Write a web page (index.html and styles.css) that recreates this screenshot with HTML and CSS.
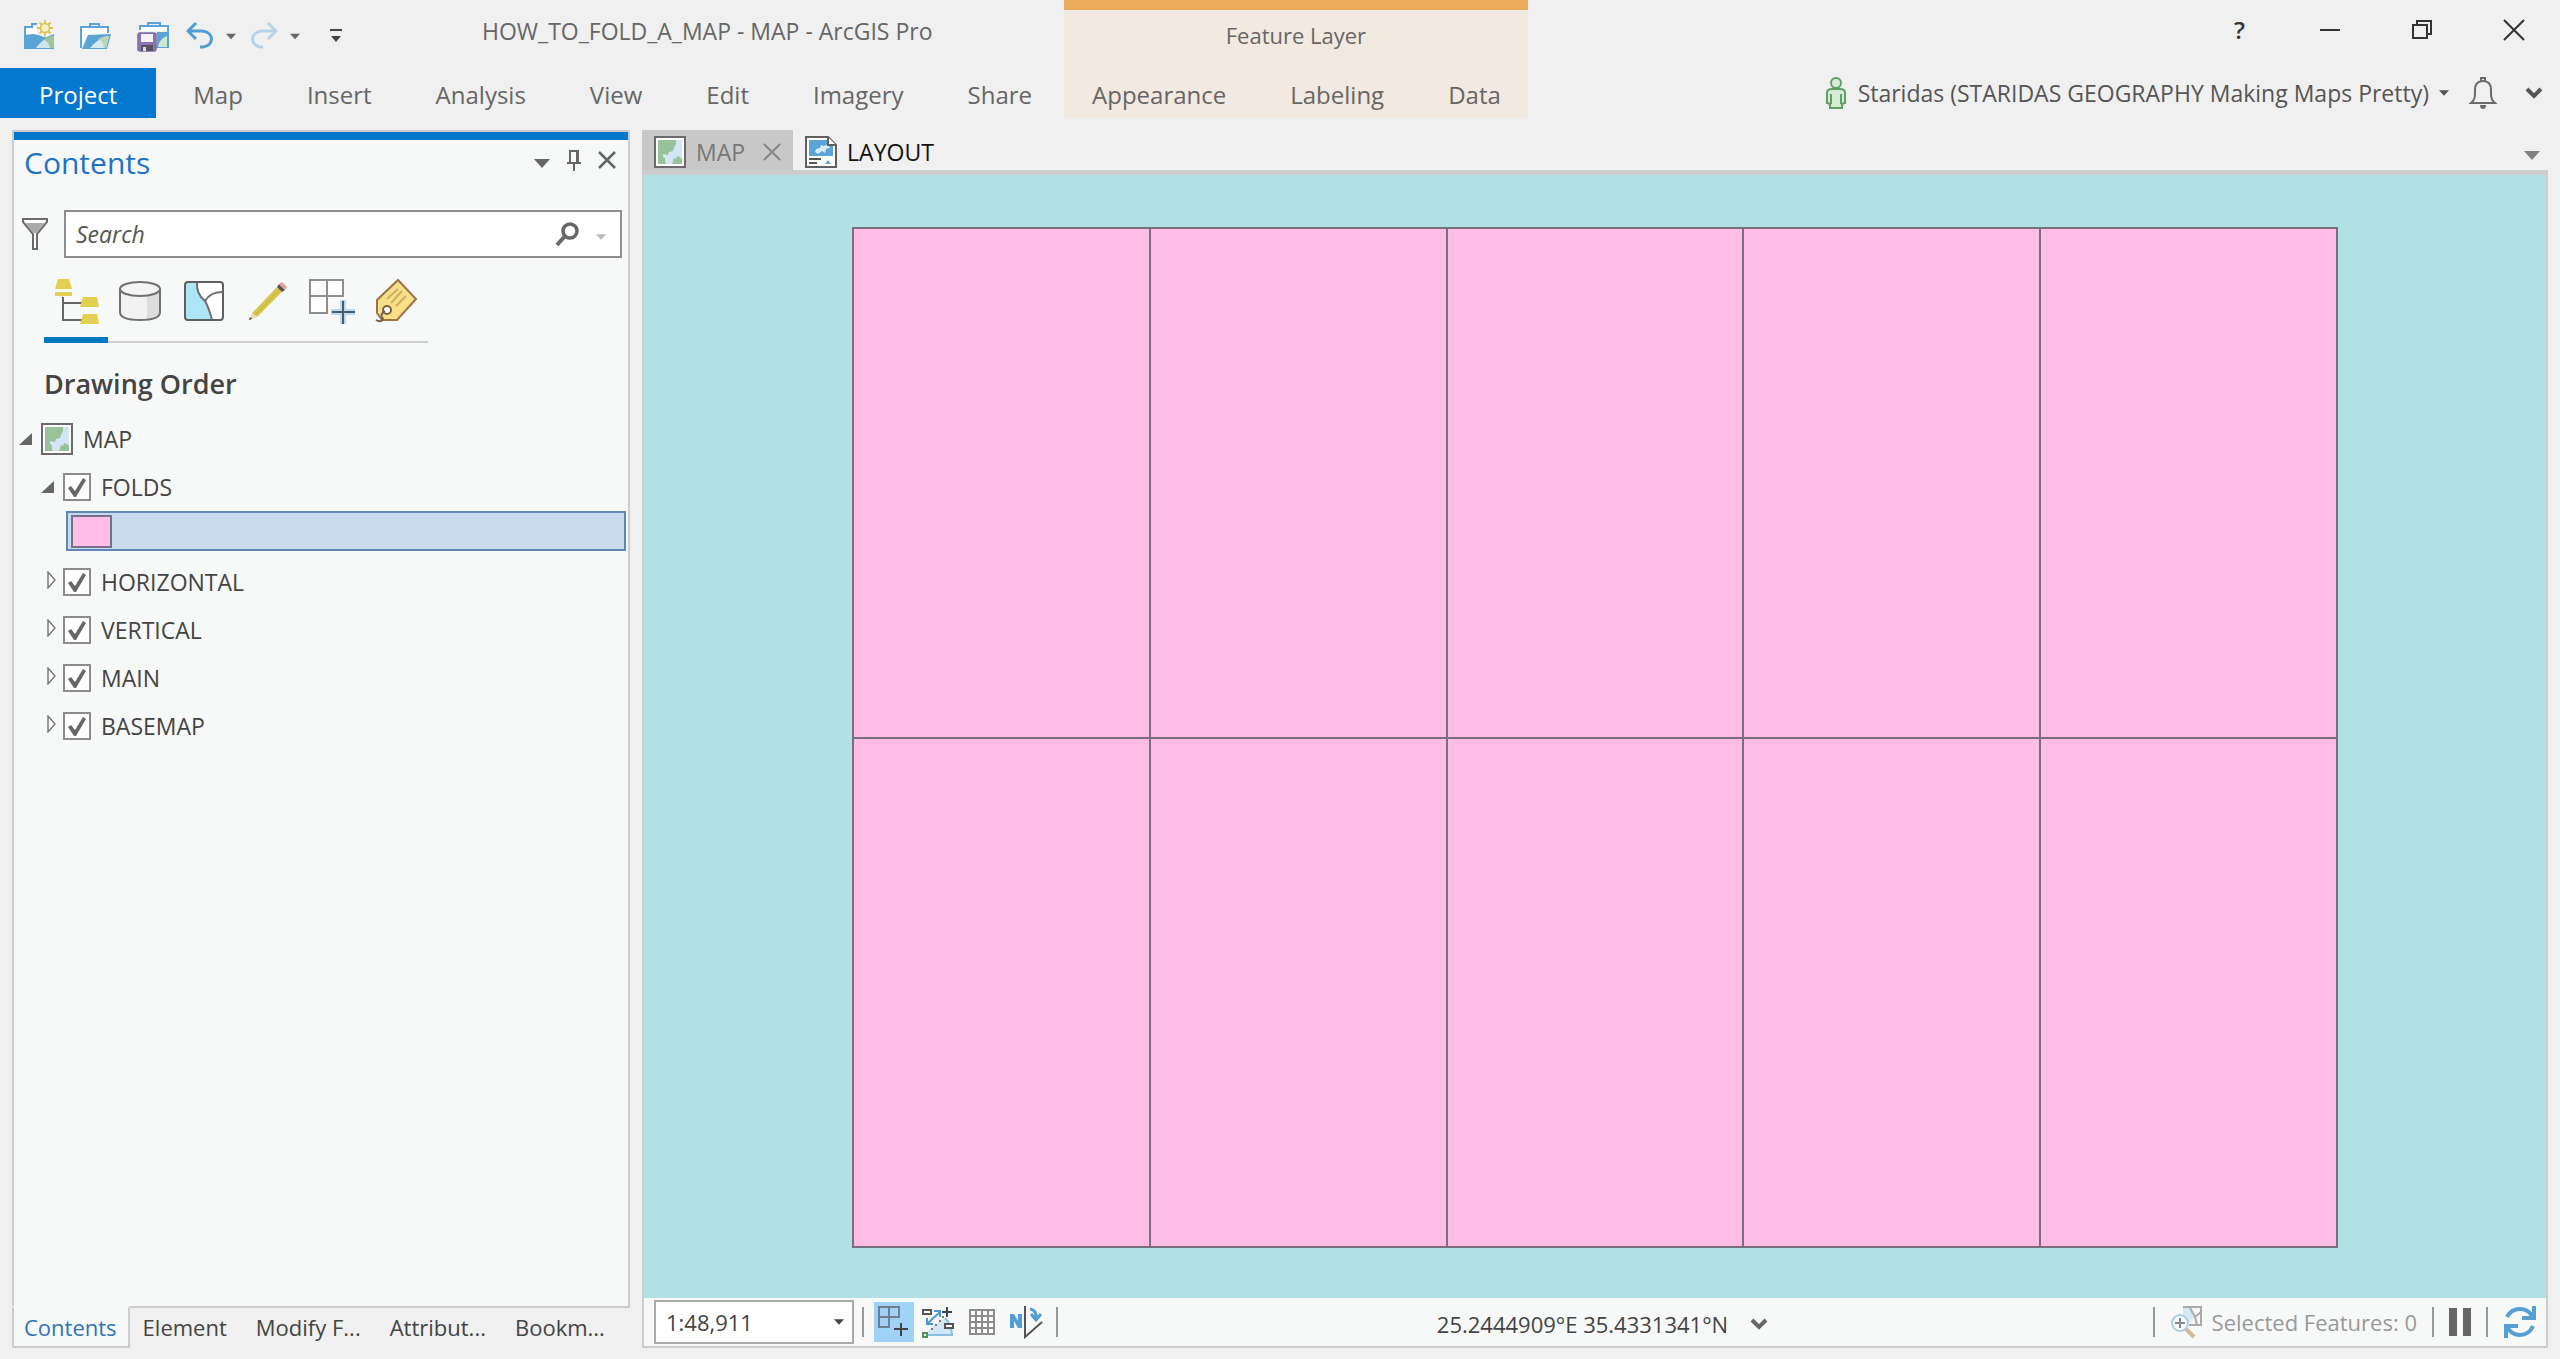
FILE: index.html
```html
<!DOCTYPE html>
<html lang="en">
<head>
<meta charset="utf-8">
<meta name="viewport" content="width=device-width, initial-scale=1">
<title>HOW_TO_FOLD_A_MAP - MAP - ArcGIS Pro</title>
<link rel="stylesheet" href="styles.css">
</head>
<body>
<svg class="defs" aria-hidden="true">
  <symbol id="mapdoc" viewBox="0 0 32 32">
    <rect x="1" y="1" width="30" height="30" fill="#fff" stroke="#6a6a6a" stroke-width="2"/>
    <rect x="4" y="4" width="24" height="24" fill="#d3e6f5"/>
    <path d="M4 4h18v4l-2 4-1 3-4 1-1 3-5-1v3l2 1v4l1 2H4z" fill="#98c298"/>
    <path d="M18 28l2-6 2 1 1-3 3 1 2 2v5z" fill="#98c298"/>
  </symbol>
  <symbol id="down" viewBox="0 0 16 9"><path d="M0 0h16L8 9z" fill="currentColor"/></symbol>
  <symbol id="chevron" viewBox="0 0 18 12"><path d="M2 2l7 7 7-7" fill="none" stroke="currentColor" stroke-width="4"/></symbol>
  <symbol id="open-node" viewBox="0 0 14 12"><path d="M13 0v12H0z" fill="#666"/></symbol>
  <symbol id="closed-node" viewBox="0 0 10 18"><path d="M1 1v16l7-8z" fill="#fff" stroke="#777" stroke-width="1.4"/></symbol>
</svg>

<header class="ribbon">
  <div class="title-left">
    <div class="quick">
      <button type="button" class="q-new" aria-label="New project">
        <svg width="32" height="32" viewBox="0 0 32 32"><path d="M1 29V7h7V4h6" fill="none" stroke="#5ba4d6" stroke-width="2"/><path d="M2 8h28v6H2z" fill="#fff"/><path d="M1 15l9-1 12 3 8-3v15H1z" fill="#5ba4d6"/><path d="M12 28q6-9 17-12v12z" fill="#cfe6f2"/><path d="M19 19q6 3 7 9h4V16q-6 0-11 3z" fill="#9cc39c"/><circle cx="21" cy="8" r="9" fill="#f3f3f3"/><circle cx="21" cy="8" r="4.500" fill="#f6efc4" stroke="#dcc04d" stroke-width="1.600"/><path d="M21 0v3M21 13v3M13 8h3M26 8h3M15.500 2.500l2 2M24.500 11.500l2 2M26.500 2.500l-2 2M17.500 11.500l-2 2" stroke="#dcc04d" stroke-width="1.800"/></svg>
      </button>
      <button type="button" class="q-open" aria-label="Open project">
        <svg width="32" height="32" viewBox="0 0 32 32"><path d="M10 7V4h9v3M1 28V7h27v6" fill="#f7f7f7" stroke="#5ba4d6" stroke-width="2"/><path d="M2 27V8h25v5H8z" fill="#fdfdfd"/><path d="M8 15l23-1-4 15H2z" fill="#5ba4d6"/><path d="M10 28q7-9 19-12l-3 12z" fill="#d5ebf0"/><path d="M18 19q5 1 6 9h2l3-12q-6 0-11 3z" fill="#bcd6b0"/></svg>
      </button>
      <button type="button" class="q-save" aria-label="Save project">
        <svg width="34" height="34" viewBox="0 0 34 34"><path d="M12 7V4h12v3M4 11V7h28v21H20" fill="none" stroke="#5ba4d6" stroke-width="2"/><path d="M5 8h26v4H5z" fill="#fff"/><path d="M21 13h10v15H21z" fill="#5ba4d6"/><path d="M22 28q1-8 9-11v11z" fill="#cfe6d4"/><rect x="2" y="14" width="18" height="18" rx="2" fill="#8a74b4" stroke="#7f69aa" stroke-width="1.500"/><rect x="5" y="15" width="12" height="8" fill="#f6f2fa"/><rect x="5" y="26" width="12" height="6" fill="#55525c"/><rect x="7" y="28" width="3" height="4" fill="#ddd"/></svg>
      </button>
      <button type="button" class="q-undo" aria-label="Undo">
        <svg width="28" height="30" viewBox="0 0 28 30"><path d="M10 2L2 10l8 8M3 10h13c13 1 12 15 1 16h-3" fill="none" stroke="#4f9dd4" stroke-width="3"/></svg>
      </button>
      <button type="button" class="q-more" aria-label="Undo list"><svg width="10" height="7"><use href="#down"/></svg></button>
      <button type="button" class="q-redo" aria-label="Redo">
        <svg width="28" height="30" viewBox="0 0 28 30"><path d="M18 2l8 8-8 8M25 10H12C-1 11 0 25 11 26h2" fill="none" stroke="#b5d3e8" stroke-width="3"/></svg>
      </button>
      <button type="button" class="q-more" aria-label="Redo list"><svg width="10" height="7"><use href="#down"/></svg></button>
      <button type="button" class="q-custom" aria-label="Customize quick access toolbar">
        <svg width="12" height="14" viewBox="0 0 12 14"><path d="M0 0h12v2H0zM1 7h10l-5 6z" fill="#444"/></svg>
      </button>
    </div>
    <h1 class="title">HOW_TO_FOLD_A_MAP - MAP - ArcGIS Pro</h1>
  </div>
  <div class="context-title">Feature Layer</div>
  <div class="window-buttons">
    <button type="button" class="help" aria-label="Help">?</button>
    <button type="button" aria-label="Minimize"><svg width="24" height="24" viewBox="0 0 24 24"><path d="M2 12h20" stroke="#333" stroke-width="2"/></svg></button>
    <button type="button" aria-label="Restore"><svg width="24" height="24" viewBox="0 0 24 24"><path d="M7 7V3h14v13h-4M3 7h14v13H3z" fill="none" stroke="#333" stroke-width="2"/></svg></button>
    <button type="button" aria-label="Close"><svg width="24" height="24" viewBox="0 0 24 24"><path d="M2 2l20 20M22 2L2 22" stroke="#333" stroke-width="2"/></svg></button>
  </div>
  <nav class="tabs" aria-label="Ribbon">
    <button type="button" class="project">Project</button>
    <button type="button">Map</button>
    <button type="button">Insert</button>
    <button type="button">Analysis</button>
    <button type="button">View</button>
    <button type="button">Edit</button>
    <button type="button">Imagery</button>
    <button type="button">Share</button>
  </nav>
  <nav class="tabs context-tabs" aria-label="Feature Layer">
    <button type="button">Appearance</button>
    <button type="button">Labeling</button>
    <button type="button">Data</button>
  </nav>
  <div class="account">
    <button type="button" class="user">
      <svg width="20" height="34" viewBox="0 0 20 34"><circle cx="10" cy="7" r="5" fill="#d6ecd4" stroke="#5f9f66" stroke-width="2"/><path d="M1 27V17q0-4 5-4h8q5 0 5 4v10l-3 1v4H4v-4zM5 28V18M15 28V18" fill="#d6ecd4" stroke="#5f9f66" stroke-width="2"/></svg>
      <span>Staridas (STARIDAS GEOGRAPHY Making Maps Pretty)</span>
      <svg width="10" height="6"><use href="#down"/></svg>
    </button>
    <button type="button" class="bell" aria-label="Notifications">
      <svg width="28" height="34" viewBox="0 0 28 34"><path d="M2 27q4-3 4-9v-4q0-9 8-9t8 9v4q0 6 4 9zM12 5V2h4v3" fill="none" stroke="#6a6a6a" stroke-width="2"/><path d="M11 29h6q0 4-3 4t-3-4z" fill="#6a6a6a"/></svg>
    </button>
    <button type="button" aria-label="Collapse ribbon"><svg width="18" height="12"><use href="#chevron"/></svg></button>
  </div>
</header>

<main class="workspace">
  <aside class="dock">
    <section class="pane">
      <div class="pane-head">
        <h2>Contents</h2>
        <button type="button" aria-label="Pane options"><svg width="16" height="9"><use href="#down"/></svg></button>
        <button type="button" class="pin" aria-label="Auto hide"><svg width="16" height="22" viewBox="0 0 16 22"><path d="M4 14V2h8v12M1 14h14M8 14v8" fill="none" stroke="#666" stroke-width="2"/><path d="M10 2h2v12h-2z" fill="#666"/></svg></button>
        <button type="button" class="pin" aria-label="Close pane"><svg width="18" height="18" viewBox="0 0 18 18"><path d="M1 1l16 16M17 1L1 17" stroke="#666" stroke-width="2.500"/></svg></button>
      </div>
      <div class="search-row">
        <button type="button" aria-label="Filter"><svg width="28" height="34" viewBox="0 0 28 34"><path d="M2 2h24v3L16 17v15h-4V17L2 5z" fill="#fff" stroke="#6a6a6a" stroke-width="2"/><path d="M4 6h20l-8 10h-4z" fill="#aaa"/></svg></button>
        <div class="search">
          <input type="text" placeholder="Search" aria-label="Search">
          <button type="button" aria-label="Find"><svg width="24" height="26" viewBox="0 0 24 26"><circle cx="15" cy="10" r="7" fill="none" stroke="#666" stroke-width="3.500"/><path d="M10 15l-8 9" stroke="#666" stroke-width="4"/></svg></button>
          <button type="button" class="faint" aria-label="Search options"><svg width="10" height="6"><use href="#down"/></svg></button>
        </div>
      </div>
      <div class="views">
        <button type="button" class="current" aria-label="List by drawing order"><svg width="46" height="46" viewBox="0 0 46 46"><path d="M10 19v24M10 25h20M9 42h21" fill="none" stroke="#666" stroke-width="2"/><path d="M5 1h11l3 10H2zM2 14h17v4H2zM30 19h14l2 10H27zM30 36h14l2 10H27z" fill="#e3cf50"/></svg></button>
        <button type="button" aria-label="List by data source"><svg width="46" height="46" viewBox="0 0 46 46"><path d="M3 10v24q0 8 20 8t20-8V10" fill="#f2f2f2"/><path d="M30 17q9-2 13-6v23q-2 5-13 7z" fill="#ddd"/><path d="M3 11v23q0 8 20 8t20-8V11" fill="none" stroke="#707070" stroke-width="2"/><ellipse cx="23" cy="11" rx="20" ry="7" fill="#f5f5f5" stroke="#707070" stroke-width="2"/></svg></button>
        <button type="button" aria-label="List by selection"><svg width="46" height="46" viewBox="0 0 46 46"><rect x="4" y="4" width="38" height="38" rx="3" fill="#fff"/><path d="M16 4q-1 12 8 19 4 7 7 19H7q-3 0-3-3V7q0-3 3-3z" fill="#aee6f8"/><path d="M16 4q-1 12 8 19 4 7 7 19M24 23q5-9 18-9" fill="none" stroke="#707070" stroke-width="2"/><rect x="4" y="4" width="38" height="38" rx="3" fill="none" stroke="#5f5f5f" stroke-width="2"/></svg></button>
        <button type="button" aria-label="List by editing"><svg width="46" height="46" viewBox="0 0 46 46"><path d="M7 35L32 9l5 5-25 25z" fill="#d9c552"/><path d="M10 37l25-26" stroke="#c2ad3a" stroke-width="1"/><path d="M7 35l5 4-8 3z" fill="#eed8a8"/><path d="M4 42l1-3 2 2z" fill="#444"/><path d="M32 9l2-3 6 6-3 2z" fill="#555"/><path d="M34 6l3-2 5 5-2 3z" fill="#dda09a"/></svg></button>
        <button type="button" aria-label="List by snapping"><svg width="46" height="46" viewBox="0 0 46 46"><path d="M1 2h33v16H1zM1 18v17h17V2" fill="#fff" stroke="#8e8e8e" stroke-width="2"/><path d="M34 22v24M22 34h24" stroke="#b9dcf5" stroke-width="6"/><path d="M34 23v23M23 34h23" stroke="#4a5a68" stroke-width="2"/></svg></button>
        <button type="button" aria-label="List by labeling"><svg width="46" height="46" viewBox="0 0 46 46"><path d="M25 2l18 19-19 21H9l-5-7V22z" fill="#f8df8a" stroke="#9c7444" stroke-width="2"/><path d="M14 21l11-10M18 25l11-12M23 28l10-10" stroke="#cfae5f" stroke-width="2"/><circle cx="14" cy="32" r="4" fill="#fff" stroke="#7a6040" stroke-width="2"/><path d="M12 33q-6 4-2 8-2 4-7 1" fill="none" stroke="#77604a" stroke-width="2"/></svg></button>
      </div>
      <h3>Drawing Order</h3>
      <ul class="tree">
        <li class="root"><svg width="14" height="12"><use href="#open-node"/></svg><svg width="32" height="32"><use href="#mapdoc"/></svg><span>MAP</span></li>
        <li><svg width="14" height="12"><use href="#open-node"/></svg><label><input type="checkbox" checked><span>FOLDS</span></label></li>
        <li class="symbol"><span class="swatch"></span></li>
        <li><svg width="10" height="18"><use href="#closed-node"/></svg><label><input type="checkbox" checked><span>HORIZONTAL</span></label></li>
        <li><svg width="10" height="18"><use href="#closed-node"/></svg><label><input type="checkbox" checked><span>VERTICAL</span></label></li>
        <li><svg width="10" height="18"><use href="#closed-node"/></svg><label><input type="checkbox" checked><span>MAIN</span></label></li>
        <li><svg width="10" height="18"><use href="#closed-node"/></svg><label><input type="checkbox" checked><span>BASEMAP</span></label></li>
      </ul>
    </section>
    <nav class="dock-tabs" aria-label="Panes">
      <button type="button" class="current">Contents</button>
      <button type="button">Element</button>
      <button type="button">Modify F...</button>
      <button type="button">Attribut...</button>
      <button type="button">Bookm...</button>
    </nav>
  </aside>

  <section class="document">
    <div class="doc-tabs">
      <div class="doc-tab current">
        <svg width="32" height="32"><use href="#mapdoc"/></svg>
        <button type="button">MAP</button>
        <button type="button" class="close" aria-label="Close MAP"><svg width="18" height="18" viewBox="0 0 18 18"><path d="M1 1l16 16M17 1L1 17" stroke="#858585" stroke-width="2"/></svg></button>
      </div>
      <div class="doc-tab">
        <svg width="32" height="32" viewBox="0 0 32 32"><path d="M1 1h22l8 8v22H1z" fill="#fff" stroke="#606060" stroke-width="2"/><path d="M4 4h18v6h6v10H4z" fill="#5ba4d6"/><path d="M10 16l1-3 4-1 1-3 3 1 4-2 2 4-4 1-1 4-3-2-4 3z" fill="#d6ecfa"/><path d="M23 1v8h8" fill="#fff" stroke="#606060" stroke-width="2"/><path d="M4 23h12M4 27h8" stroke="#555" stroke-width="2"/><path d="M23 24l3 4h-6z" fill="#5ba4d6"/></svg>
        <button type="button">LAYOUT</button>
      </div>
      <button type="button" class="doc-list" aria-label="Open documents"><svg width="16" height="9"><use href="#down"/></svg></button>
    </div>
    <div class="map">
      <div class="sheet">
        <i></i><i></i><i></i><i></i><i></i>
        <i></i><i></i><i></i><i></i><i></i>
      </div>
    </div>
    <footer class="status">
      <div class="status-group">
        <div class="scale">
          <select aria-label="Map scale"><option>1:48,911</option></select>
          <svg width="10" height="6"><use href="#down"/></svg>
        </div>
        <span class="rule"></span>
        <div class="tools">
          <button type="button" class="on" aria-label="Snapping"><svg width="32" height="32" viewBox="0 0 32 32"><path d="M1 1h20v10H1zM1 11v10h10V1" fill="none" stroke="#6e8090" stroke-width="2"/><path d="M23 17v13M16 23h14" stroke="#444" stroke-width="2"/></svg></button>
          <button type="button" aria-label="Dynamic constraints"><svg width="34" height="32" viewBox="0 0 34 32"><path d="M3 29q8-10 22-17 6 5 6 17z" fill="#cfe7f7"/><path d="M3 29h29M24 12q6 6 7 16" fill="none" stroke="#8bbfe2" stroke-width="2"/><path d="M7 17L19 6M13 5h6v6M6 12v6h6" fill="none" stroke="#4a98d2" stroke-width="2"/><path d="M2 4h8v4H2zM24 18h8v4h-8z" fill="#fff" stroke="#555" stroke-width="2"/><path d="M26 1v10M21 6h10" stroke="#444" stroke-width="2"/><path d="M10 22h2v2h-2zM14 18h2v2h-2zM18 14h2v2h-2zM21 10h2v2h-2z" fill="#8a7a60"/><path d="M1 26h6v6H1z" fill="#4f955a"/><path d="M3 28h2v2H3z" fill="#fff"/></svg></button>
          <button type="button" aria-label="Grid"><svg width="26" height="26" viewBox="0 0 26 26"><path d="M1 1h24v24H1zM1 7h24M1 13h24M1 19h24M7 1v24M13 1v24M19 1v24" fill="#fff" stroke="#8c8c8c" stroke-width="2"/></svg></button>
          <button type="button" aria-label="Corrections"><svg width="34" height="34" viewBox="0 0 34 34"><path d="M1 23V9h4l4 7V9h4v14H9l-4-7v7z" fill="#4f9fd6"/><path d="M16 1v31l17-15" fill="none" stroke="#555" stroke-width="2"/><path d="M21 4q7 1 6 10M22 9l5 6 5-6" fill="none" stroke="#4f9fd6" stroke-width="3"/></svg></button>
        </div>
        <span class="rule"></span>
      </div>
      <button type="button" class="coords">25.2444909°E 35.4331341°N <svg width="18" height="12"><use href="#chevron"/></svg></button>
      <div class="status-group end">
        <span class="rule"></span>
        <button type="button" class="selected" disabled>
          <svg width="34" height="34" viewBox="0 0 34 34"><path d="M13 2h18v18H19" fill="#f6f6f6" stroke="#aaa" stroke-width="2"/><path d="M13 3h7l5 9-6 6-6-6z" fill="#d5eaf5"/><path d="M20 3l5 9 6-5M25 12l2 8" fill="none" stroke="#aaa" stroke-width="2"/><circle cx="10" cy="18" r="8" fill="#f7fbff" stroke="#a9cdea" stroke-width="2"/><path d="M10 13v10M5 18h10" stroke="#888" stroke-width="2"/><path d="M16 24l8 8" stroke="#d8ba92" stroke-width="4"/></svg>
          Selected Features: 0
        </button>
        <span class="rule"></span>
        <button type="button" aria-label="Pause drawing"><svg width="22" height="28" viewBox="0 0 22 28"><path d="M0 0h8v28H0zM14 0h8v28h-8z" fill="#666"/></svg></button>
        <span class="rule"></span>
        <button type="button" aria-label="Refresh"><svg width="34" height="34" viewBox="0 0 34 34"><path d="M4 12q4-8 13-8 8 0 12 7M30 21q-4 9-13 9-8 0-12-7" fill="none" stroke="#559fd3" stroke-width="4"/><path d="M33 1v14H19v-4h10V1zM1 33V19h14v4H5v10z" fill="#559fd3"/></svg></button>
      </div>
    </footer>
  </section>
</main>
</body>
</html>
```

FILE: styles.css
```css
* { box-sizing: border-box; }
html, body { height: 100%; }
body {
  margin: 0;
  display: flex;
  flex-direction: column;
  background: #f0f0f0;
  color: #444;
  font: 22px/32px "Open Sans", "Noto Sans", sans-serif;
}
h1, h2, h3, ul { margin: 0; padding: 0; font-weight: 400; list-style: none; }
button {
  display: flex;
  align-items: center;
  padding: 0;
  border: 0;
  background: none;
  color: inherit;
  font: inherit;
  white-space: nowrap;
}
svg { display: block; flex: none; }
.defs { position: absolute; width: 0; height: 0; }

/* Ribbon */
.ribbon {
  display: grid;
  grid-template-columns: auto auto 1fr;
  grid-template-rows: 68px 50px;
  padding-bottom: 12px;
  color: #666;
}
.title-left { display: flex; align-items: center; gap: 140px; }
.quick { display: flex; align-items: center; padding: 4px 0 0 24px; }
.q-new, .q-open { margin-right: 24px; }
.q-save { margin-right: 16px; }
.q-undo, .q-redo { margin-right: 12px; }
.q-more { margin-right: 14px; }
.q-custom { margin-left: 16px; }
.title { font-size: 23px; line-height: 32px; padding-bottom: 6px; }
.context-title {
  display: flex;
  align-items: center;
  justify-content: center;
  border-top: 10px solid #ebaa5b;
  background: #f2e9e0;
  padding-bottom: 8px;
}
.window-buttons {
  display: flex;
  align-items: center;
  justify-content: flex-end;
  gap: 68px;
  padding: 0 34px 8px 0;
}
.help { margin-right: 5px; color: #333; font-size: 24px; font-weight: 600; }
.tabs { display: flex; font-size: 24px; }
.tabs button { padding: 4px 32px 0; }
.tabs .project { margin-right: 5px; padding: 4px 39px 0; background: #0477cf; color: #fff; }
.context-tabs { background: #f2e9e0; }
.context-tabs button:first-child { padding-left: 28px; }
.context-tabs button:last-child { padding-right: 27px; }
.account {
  display: flex;
  align-items: center;
  justify-content: flex-end;
  gap: 28px;
  padding-right: 17px;
  color: #555;
  font-size: 23px;
}
.user { gap: 12px; }
.user svg:last-child { margin-left: -2px; }
.bell { margin-left: -8px; }

/* Workspace */
.workspace {
  flex: 1;
  display: flex;
  gap: 12px;
  min-height: 0;
  padding: 0 12px 11px 12px;
}
.dock { flex: none; width: 618px; display: flex; flex-direction: column; }
.pane {
  flex: 1;
  border: 2px solid #cdcdcd;
  background: #f7f9f8;
}
.pane-head {
  display: flex;
  align-items: center;
  gap: 16px;
  height: 60px;
  padding: 0 12px 6px 10px;
  border-top: 8px solid #0477cf;
  color: #666;
}
.pane-head h2 { flex: 1; color: #1d73c4; font-size: 30px; line-height: 40px; }
.pane-head .pin { padding-bottom: 6px; }
.search-row { display: flex; align-items: center; gap: 15px; margin: 18px 6px 0 7px; }
.search {
  flex: 1;
  display: flex;
  align-items: center;
  height: 48px;
  gap: 17px;
  padding: 0 14px 0 10px;
  border: 2px solid #8e8e8e;
  background: #fff;
}
.search input {
  flex: 1;
  min-width: 0;
  padding: 0;
  border: 0;
  outline: 0;
  background: none;
  font: italic 23px/32px "Open Sans", "Noto Sans", sans-serif;
}
.search input::placeholder { color: #555; opacity: 1; }
.faint { padding-top: 6px; color: #bbb; }
.views {
  display: flex;
  width: 384px;
  margin: 17px 0 0 30px;
  border-bottom: 2px solid #cdcdcd;
}
.views button {
  flex: 1;
  justify-content: center;
  height: 68px;
  margin-bottom: -2px;
  padding-bottom: 10px;
  border-bottom: 6px solid transparent;
}
.views .current { border-color: #0477bf; }
.pane h3 { margin: 23px 0 13px 30px; font-size: 27px; line-height: 36px; font-weight: 600; }
.tree { font-size: 23px; }
.tree li { display: flex; align-items: center; height: 48px; padding-left: 27px; }
.tree li > svg[width="10"] { margin: 0 0 4px 6px; }
.tree label { display: flex; align-items: center; gap: 10px; margin-left: 8px; }
.tree svg[width="10"] + label { margin-left: 6px; }
.tree .root { gap: 8px; padding-left: 5px; }
.tree .root span { margin-left: 2px; }
.tree .symbol {
  height: 40px;
  margin: 0 2px 7px 52px;
  padding: 0 0 0 3px;
  border: 2px solid #5f87b3;
  background: #c6dbee;
}
.swatch { width: 41px; height: 33px; border: 2px solid #77708a; background: #ffbde8; }
.tree input {
  appearance: none;
  width: 28px;
  height: 28px;
  margin: 0;
  border: 2px solid #8c8c8c;
  background: #fff;
}
.tree input:checked::before {
  content: "";
  display: block;
  width: 24px;
  height: 24px;
  background: #666;
  clip-path: polygon(3px 13px, 6px 11px, 10px 16px, 18px 3px, 21px 5px, 11px 22px, 9px 22px);
}
.dock-tabs { display: flex; height: 42px; margin-top: -2px; }
.dock-tabs button { padding: 0 16px 0 13px; }
.dock-tabs .current {
  z-index: 1;
  height: 42px;
  padding: 0 11px 0 10px;
  border: 2px solid #cdcdcd;
  border-top-color: #f7f9f8;
  background: #f7f9f8;
  color: #2f74b8;
}

/* Map document */
.document { flex: 1; min-width: 0; display: flex; flex-direction: column; }
.doc-tabs { display: flex; height: 40px; }
.doc-tab { display: flex; align-items: center; gap: 10px; padding: 6px 12px 2px; color: #111; font-size: 23px; }
.doc-tab.current { background: #c8c8c8; color: #777; }
.doc-tab .close { margin-left: 8px; }
.doc-list { margin: 10px 8px 0 auto; color: #808080; }
.map {
  flex: 1;
  display: flex;
  border: solid #cdcdcd;
  border-width: 5px 2px 0;
  background: #b1e1e2;
  padding: 52px 208px 50px;
}
.sheet {
  flex: 1;
  display: grid;
  grid-template: 1fr 1fr / repeat(5, 1fr);
  gap: 2px;
  padding: 2px;
  background: #77707d;
}
.sheet i { background: #ffbde6; }
.status {
  display: grid;
  grid-template-columns: 1fr auto 1fr;
  align-items: center;
  height: 50px;
  padding: 0 9px 0 10px;
  border: solid #cdcdcd;
  border-width: 0 2px 2px;
  background: #f7f9f8;
}
.status-group { display: flex; align-items: center; }
.status-group.end { justify-content: flex-end; gap: 15px; }
.scale {
  display: flex;
  align-items: center;
  width: 200px;
  height: 44px;
  margin-right: 8px;
  border: 2px solid #aaa;
  background: #fff;
}
.scale select {
  flex: 1;
  height: 40px;
  margin-right: -20px;
  padding: 0 30px 0 10px;
  border: 0;
  appearance: none;
  background: none;
  color: #444;
  font: inherit;
}
.scale svg { margin-right: 8px; pointer-events: none; }
.rule { width: 2px; height: 30px; background: #999; }
.tools { display: flex; align-items: center; gap: 4px; margin: 0 10px; }
.tools button { justify-content: center; width: 40px; height: 40px; }
.tools .on { background: #9fd2f5; }
.coords { gap: 22px; padding: 3px 0 0 14px; }
.coords svg { color: #666; }
.selected { gap: 8px; color: #999; }
```
